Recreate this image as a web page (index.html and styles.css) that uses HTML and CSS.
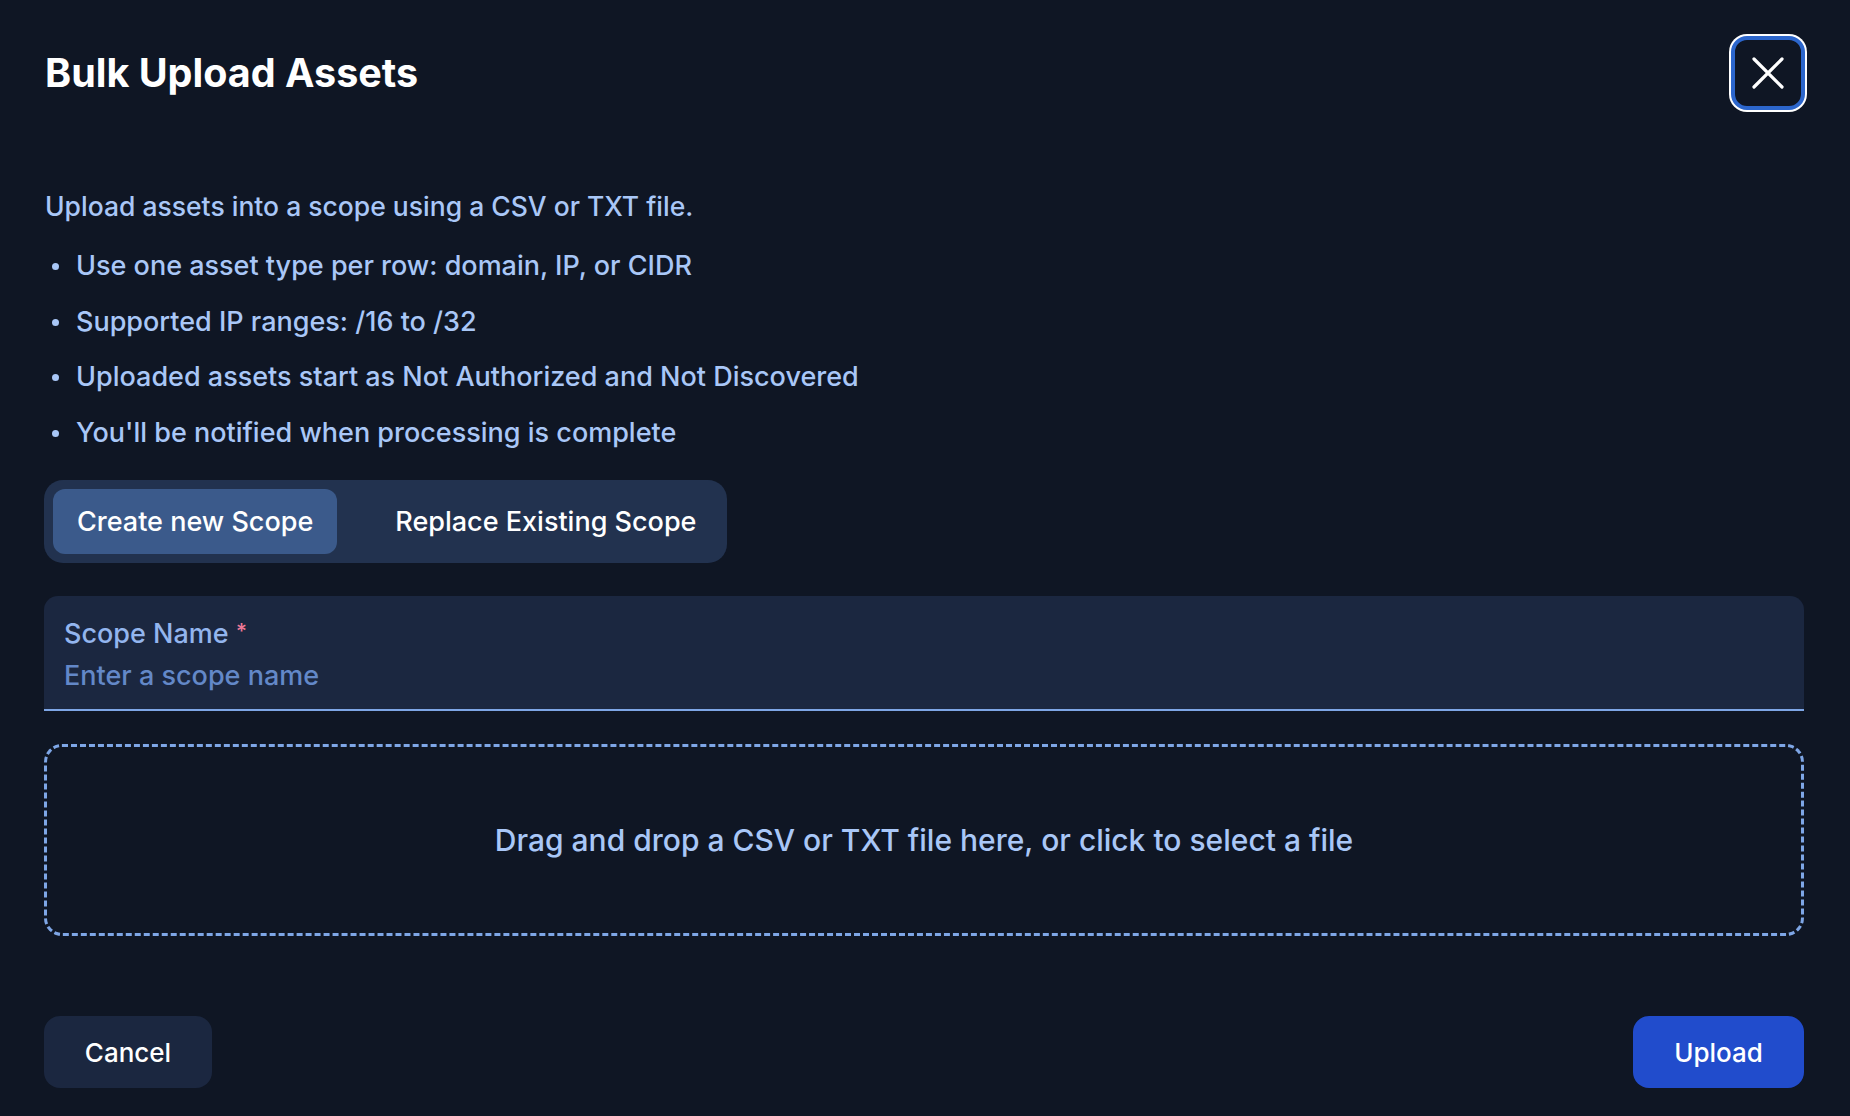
FILE: index.html
```html
<!DOCTYPE html>
<html lang="en">
<head>
<meta charset="utf-8">
<title>Bulk Upload Assets</title>
<link rel="stylesheet" href="styles.css">
</head>
<body>
<div class="dialog">
  <header class="dialog-header">
    <h1 class="dialog-title">Bulk Upload Assets</h1>
    <button class="close-btn" aria-label="Close">
      <svg width="34" height="34" viewBox="0 0 34 34" fill="none" stroke="#ffffff" stroke-width="3.2" stroke-linecap="round">
        <path d="M3 3 L31 31 M31 3 L3 31"/>
      </svg>
    </button>
  </header>

  <p class="intro">Upload assets into a scope using a CSV or TXT file.</p>
  <ul class="rules">
    <li>Use one asset type per row: domain, IP, or CIDR</li>
    <li>Supported IP ranges: /16 to /32</li>
    <li>Uploaded assets start as Not Authorized and Not Discovered</li>
    <li>You'll be notified when processing is complete</li>
  </ul>

  <div class="toggle">
    <button class="toggle-tab active">Create new Scope</button>
    <button class="toggle-tab">Replace Existing Scope</button>
  </div>

  <div class="field">
    <label class="field-label">Scope Name <span class="req">*</span></label>
    <div class="field-input">Enter a scope name</div>
  </div>

  <div class="dropzone">Drag and drop a CSV or TXT file here, or click to select a file</div>

  <footer class="dialog-footer">
    <button class="btn btn-cancel">Cancel</button>
    <button class="btn btn-upload">Upload</button>
  </footer>
</div>
</body>
</html>
```
FILE: styles.css
```css
* { box-sizing: border-box; }
html, body {
  margin: 0;
  padding: 0;
  background: #0f1624;
  height: 100%;
}
body {
  font-family: Inter, "Noto Sans", "Liberation Sans", sans-serif;
  color: #a9c7f7;
}
.dialog {
  padding: 34px 46px 0 44px;
  display: flex;
  flex-direction: column;
}
.dialog-header {
  display: flex;
  align-items: center;
  justify-content: space-between;
  height: 78px;
}
.dialog-title {
  margin: 0 0 0 1px;
  font-size: 39.5px;
  font-weight: 700;
  color: #ffffff;
  letter-spacing: 0;
}
.close-btn {
  width: 74px;
  height: 74px;
  margin-right: -1px;
  border: 4px solid #2c66cc;
  border-radius: 16px;
  box-shadow: 0 0 0 2px #ffffff;
  background: #0f1624;
  display: flex;
  align-items: center;
  justify-content: center;
  padding: 0;
}
.intro {
  margin: 78px 0 0 1px;
  font-size: 26.5px;
  line-height: 32px;
  font-weight: 500;
}
.rules {
  list-style: none;
  margin: 28px 0 0 0;
  padding: 0;
}
.rules li {
  position: relative;
  font-size: 27px;
  font-weight: 500;
  line-height: 32px;
  padding-left: 32px;
  margin-bottom: 23.5px;
}
.rules li::before {
  content: "";
  position: absolute;
  left: 8px;
  top: 13px;
  width: 7px;
  height: 7px;
  border-radius: 50%;
  background: #a9c7f7;
}
.toggle {
  align-self: flex-start;
  display: flex;
  gap: 34px;
  margin-top: 8px;
  padding: 9px;
  background: #22324f;
  border-radius: 19px;
  height: 83px;
}
.toggle-tab {
  font-family: inherit;
  font-size: 27px;
  font-weight: 500;
  color: #ffffff;
  background: transparent;
  border: 0;
  border-radius: 12px;
  padding: 0 24px;
}
.toggle-tab.active {
  background: #3b5a8b;
}
.toggle-tab:last-child {
  padding-right: 22px;
}
.field {
  margin-top: 33px;
  height: 115px;
  background: #1b2740;
  border-radius: 14px 14px 0 0;
  border-bottom: 2px solid #7ea6e6;
  padding: 20px 20px 0 20px;
}
.field-label {
  display: block;
  font-size: 27px;
  font-weight: 500;
  line-height: 32px;
  color: #93b5ee;
}
.req { color: #f07a98; font-size: 21px; vertical-align: 4px; }
.field-input {
  margin-top: 10px;
  font-size: 27px;
  font-weight: 500;
  line-height: 32px;
  color: #6388c8;
}
.dropzone {
  margin-top: 33px;
  height: 192px;
  border: 3px dashed #7ea6e6;
  border-radius: 18px;
  display: flex;
  align-items: center;
  justify-content: center;
  font-size: 30px;
  font-weight: 500;
  color: #a9c7f7;
}
.dialog-footer {
  margin-top: 80px;
  display: flex;
  justify-content: space-between;
}
.btn {
  height: 72px;
  border: 0;
  border-radius: 16px;
  font-family: Inter, "Liberation Sans", sans-serif;
  font-size: 26px;
  font-weight: 500;
  color: #ffffff;
}
.btn-cancel {
  width: 168px;
  background: #1b2740;
}
.btn-upload {
  width: 171px;
  background: #214ccc;
}
```
